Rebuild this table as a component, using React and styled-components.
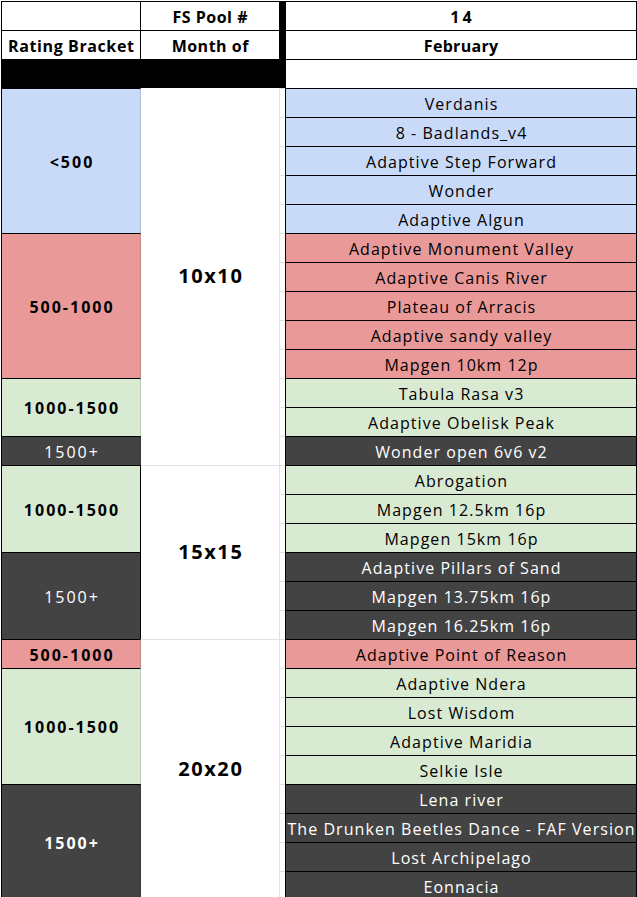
import React from "react";
import styled, { createGlobalStyle, css } from "styled-components";

const ROW = 29;

const Global = createGlobalStyle`
  html, body { margin: 0; padding: 0; overflow: hidden; background: #fff; }
  body { font-family: "Open Sans", "Noto Sans", sans-serif; }
`;

const tones = {
  white: { bg: "#ffffff", fg: "#000000" },
  black: { bg: "#000000", fg: "#ffffff" },
  blue: { bg: "#c9daf8", fg: "#000000" },
  red: { bg: "#ea9999", fg: "#000000" },
  green: { bg: "#d9ead3", fg: "#000000" },
  dark: { bg: "#434343", fg: "#ffffff" },
};

const Sheet = styled.div`
  display: grid;
  grid-template-columns: 140px 139px 5px 352px;
  margin: 1px 0 0 1px;
  width: 636px;
`;

const Column = styled.div`
  display: flex;
  flex-direction: column;
`;

const Cell = styled.div`
  box-sizing: border-box;
  height: ${(p) => (p.$rows || 1) * ROW}px;
  display: flex;
  align-items: center;
  justify-content: center;
  padding-top: 1px;
  padding-left: ${(p) => p.$ls || 0}px;
  background: ${(p) => tones[p.$tone || "white"].bg};
  color: ${(p) => tones[p.$tone || "white"].fg};
  font-size: 16px;
  font-weight: ${(p) => (p.$bold ? 700 : 400)};
  letter-spacing: ${(p) => p.$ls || 0}px;
  white-space: nowrap;
  overflow: hidden;
`;

const BracketCell = styled(Cell)`
  border-top: 1px solid #000;
  border-left: 1px solid #000;
  border-right: 1px solid ${(p) => (p.$edge === "black" ? "#000" : "rgba(0,0,0,0.12)")};
`;

const HeadCell = styled(Cell)`
  font-weight: 700;
  border-top: 1px solid #000;
  ${(p) => p.$left && css`border-left: 1px solid #000;`}
  ${(p) => p.$right && css`border-right: 1px solid #000;`}
`;

const SizeCell = styled(Cell)`
  font-size: 20px;
  font-weight: 700;
  padding-top: 0;
  padding-bottom: 3px;
  ${(p) => p.$top && css`border-top: 1px solid #e2e2e2;`}
  border-right: 1px solid #e2e2e2;
`;

const Spacer = styled(Cell)`
  border-top: 1px solid #e2e2e2;
`;

const MapCell = styled(Cell)`
  border-top: 1px solid #000;
  border-left: 1px solid #000;
  border-right: 1px solid #000;
`;

const FillCell = styled(Cell)`
  background: #000;
`;

const brackets = [
  { label: "<500", rows: 5, tone: "blue", bold: true },
  { label: "500-1000", rows: 5, tone: "red", bold: true },
  { label: "1000-1500", rows: 2, tone: "green", bold: true },
  { label: "1500+", rows: 1, tone: "dark" },
  { label: "1000-1500", rows: 3, tone: "green", bold: true, edge: "black" },
  { label: "1500+", rows: 3, tone: "dark", edge: "black" },
  { label: "500-1000", rows: 1, tone: "red", bold: true },
  { label: "1000-1500", rows: 4, tone: "green", bold: true },
  { label: "1500+", rows: 4, tone: "dark", bold: true },
];

const sizes = [
  { label: "10x10", rows: 13 },
  { label: "15x15", rows: 6 },
  { label: "20x20", rows: 9 },
];

const maps = [
  ["Verdanis", "blue"],
  ["8 - Badlands_v4", "blue"],
  ["Adaptive Step Forward", "blue"],
  ["Wonder", "blue"],
  ["Adaptive Algun", "blue"],
  ["Adaptive Monument Valley", "red"],
  ["Adaptive Canis River", "red"],
  ["Plateau of Arracis", "red"],
  ["Adaptive sandy valley", "red"],
  ["Mapgen 10km 12p", "red"],
  ["Tabula Rasa v3", "green"],
  ["Adaptive Obelisk Peak", "green"],
  ["Wonder open 6v6 v2", "dark"],
  ["Abrogation", "green"],
  ["Mapgen 12.5km 16p", "green"],
  ["Mapgen 15km 16p", "green"],
  ["Adaptive Pillars of Sand", "dark"],
  ["Mapgen 13.75km 16p", "dark"],
  ["Mapgen 16.25km 16p", "dark"],
  ["Adaptive Point of Reason", "red"],
  ["Adaptive Ndera", "green"],
  ["Lost Wisdom", "green"],
  ["Adaptive Maridia", "green"],
  ["Selkie Isle", "green"],
  ["Lena river", "dark"],
  ["The Drunken Beetles Dance - FAF Version", "dark"],
  ["Lost Archipelago", "dark"],
  ["Eonnacia", "dark"],
];

export default function App() {
  return (
    <>
      <Global />
      <Sheet>
        <Column>
          <HeadCell $left $right />
          <HeadCell $left $right $ls={0.6}>Rating Bracket</HeadCell>
          <FillCell />
          {brackets.map((b, i) => (
            <BracketCell key={i} $rows={b.rows} $tone={b.tone} $bold={b.bold} $edge={b.edge} $ls={2}>
              {b.label}
            </BracketCell>
          ))}
        </Column>
        <Column>
          <HeadCell $right $ls={0.5}>FS Pool #</HeadCell>
          <HeadCell $right $ls={0.5}>Month of</HeadCell>
          <FillCell />
          {sizes.map((s, i) => (
            <SizeCell key={i} $rows={s.rows} $top={i > 0} $ls={1.6}>
              {s.label}
            </SizeCell>
          ))}
        </Column>
        <Column>
          <FillCell />
          <FillCell />
          <FillCell />
          {maps.map((_, i) => (
            <Spacer key={i} />
          ))}
        </Column>
        <Column>
          <HeadCell $left $right $ls={3}>14</HeadCell>
          <HeadCell $left $right $ls={0.3}>February</HeadCell>
          <HeadCell $left />
          {maps.map(([name, tone], i) => (
            <MapCell key={i} $tone={tone} $ls={1.05}>
              {name}
            </MapCell>
          ))}
        </Column>
      </Sheet>
    </>
  );
}
